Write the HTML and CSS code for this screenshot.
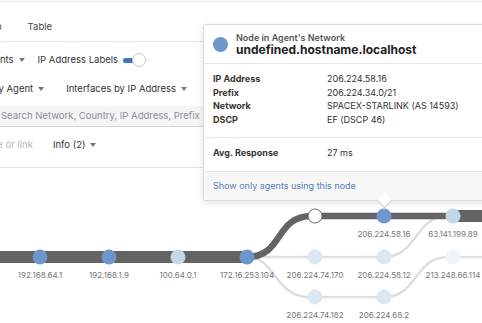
FILE: index.html
```html
<!DOCTYPE html>
<html>
<head>
    <meta charset="utf-8">
    <title>Path Visualization</title>
    <link rel="stylesheet" href="styles.css">
</head>
<body>
<div class="page">
    <nav class="tabs">
        <span class="tab tab-cut">Topo</span>
        <span class="tab">Table</span>
    </nav>

    <div class="toolbar">
        <div class="tool-row">
            <span class="tool cut-agents">Agents <i class="caret"></i></span>
            <span class="tool ip-labels">IP Address Labels
                <span class="toggle"><span class="track"></span><span class="knob"></span></span>
            </span>
        </div>
        <div class="tool-row">
            <span class="tool cut-color">Color by Agent <i class="caret"></i></span>
            <span class="tool interfaces">Interfaces by IP Address <i class="caret"></i></span>
        </div>
    </div>

    <div class="search">Search Network, Country, IP Address, Prefix</div>

    <div class="filter-row">
        <span class="filter-input">Search node or link</span>
        <span class="tool">Info (2) <i class="caret"></i></span>
    </div>

    <!-- path graph, drawn in page coordinates -->
    <svg class="graph" width="482" height="154" viewBox="0 169 482 154">
        <path class="hop-thin" d="M247 258 H384 C418 258 414 217 448 217"/>
        <path class="hop-thin" d="M247 258 C276 258 274 298 310 298 H384 C418 298 414 258 448 258 H490"/>
        <path class="hop-main" d="M-10 258 H247"/>
        <path class="hop-mid" d="M247 258 C284 258 274 217 312 217 H453"/>
        <path class="hop-main" d="M453 217 H490"/>

        <circle class="node n-blue" cx="40" cy="258" r="7.5"/>
        <circle class="node n-blue" cx="109" cy="258" r="7.5"/>
        <circle class="node n-light" cx="178" cy="258" r="7.5"/>
        <circle class="node n-blue" cx="247" cy="258" r="7.5"/>
        <circle class="node n-empty" cx="315" cy="217" r="7"/>
        <circle class="node n-blue" cx="384" cy="217" r="7.5"/>
        <circle class="node n-light" cx="453" cy="217" r="7.5"/>
        <circle class="node n-pale" cx="315" cy="258" r="7.5"/>
        <circle class="node n-pale" cx="384" cy="258" r="7.5"/>
        <circle class="node n-faint" cx="453" cy="258" r="7.5"/>
        <circle class="node n-pale" cx="315" cy="298" r="7.5"/>
        <circle class="node n-pale" cx="384" cy="298" r="7.5"/>

        <text class="ip" x="40" y="279">192.168.64.1</text>
        <text class="ip" x="109" y="279">192.168.1.9</text>
        <text class="ip" x="178" y="279">100.64.0.1</text>
        <text class="ip" x="247" y="279">172.16.253.104</text>
        <text class="ip" x="384" y="238">206.224.58.16</text>
        <text class="ip" x="453" y="238">63.141.199.89</text>
        <text class="ip" x="315" y="279">206.224.74.170</text>
        <text class="ip" x="384" y="279">206.224.58.12</text>
        <text class="ip" x="453" y="279">213.248.66.114</text>
        <text class="ip" x="315" y="319">206.224.74.182</text>
        <text class="ip" x="384" y="319">206.224.68.2</text>
    </svg>

    <div class="popover">
        <div class="pop-head">
            <span class="pop-dot"></span>
            <div>
                <div class="pop-kind">Node in Agent's Network</div>
                <div class="pop-host">undefined.hostname.localhost</div>
            </div>
        </div>
        <dl class="pop-body">
            <dt>IP Address</dt><dd>206.224.58.16</dd>
            <dt>Prefix</dt><dd>206.224.34.0/21</dd>
            <dt>Network</dt><dd>SPACEX-STARLINK (AS 14593)</dd>
            <dt>DSCP</dt><dd>EF (DSCP 46)</dd>
        </dl>
        <dl class="pop-body pop-avg">
            <dt>Avg. Response</dt><dd>27 ms</dd>
        </dl>
        <div class="pop-foot"><a href="#">Show only agents using this node</a></div>
        <span class="pop-arrow"></span>
    </div>
</div>
</body>
</html>
```

FILE: styles.css
```css
body {
    margin: 0;
    font-family: Inter, "Noto Sans", sans-serif;
    color: #333;
    background-color: #fff;
    overflow: hidden;
}

.page {
    position: relative;
    height: 322px;
    margin-top: 1px;
    border-top: 1px solid #ececec;
    overflow: hidden;
}

/* tabs */
.tabs {
    display: flex;
    gap: 26px;
    padding: 18px 0 7px;
    border-bottom: 1px solid #e4e4e4;
    font-size: 9.5px;
    line-height: 14px;
    color: #444;
}

.tab-cut {
    margin-left: -21px;
}

/* toolbar */
.toolbar {
    padding-top: 11px;
    font-size: 9.5px;
    line-height: 14px;
}

.tool-row {
    display: flex;
    align-items: center;
}

.tool-row + .tool-row {
    margin-top: 15px;
}

.tool {
    display: inline-flex;
    align-items: center;
    white-space: nowrap;
    color: #333;
}

.caret {
    display: inline-block;
    width: 0;
    height: 0;
    margin-left: 5px;
    border-left: 3px solid transparent;
    border-right: 3px solid transparent;
    border-top: 4px solid #777;
}

.cut-agents {
    margin-left: -18px;
    margin-right: 13px;
}

.cut-color {
    margin-left: -34px;
    margin-right: 22px;
}

.toggle {
    display: inline-flex;
    align-items: center;
    margin-left: 5px;
}

.toggle .track {
    width: 13px;
    height: 5px;
    border-radius: 3px;
    background-color: #3b74c4;
}

.toggle .knob {
    width: 12px;
    height: 12px;
    margin-left: -4px;
    border-radius: 50%;
    background-color: #fff;
    border: 1px solid #c8c8c8;
}

/* search */
.search {
    margin-top: 10px;
    height: 20px;
    line-height: 20px;
    padding-left: 1px;
    background-color: #f5f5f6;
    border-bottom: 1px solid #d6d6d6;
    font-size: 9.5px;
    color: #8b8d9c;
    white-space: nowrap;
}

.filter-row {
    display: flex;
    align-items: center;
    padding: 11px 0 15px;
    border-bottom: 1px solid #e4e4e4;
    font-size: 9.5px;
    line-height: 14px;
}

.filter-input {
    margin-left: -54px;
    margin-right: 20px;
    color: #b5b7c0;
    white-space: nowrap;
}

/* graph */
.graph {
    display: block;
}

.hop-main {
    fill: none;
    stroke: #646464;
    stroke-width: 12;
}

.hop-mid {
    fill: none;
    stroke: #646464;
    stroke-width: 6.5;
}

.hop-thin {
    fill: none;
    stroke: #dedede;
    stroke-width: 2.5;
}

.n-blue { fill: #6c96cc; }
.n-light { fill: #c2d7ea; }
.n-pale { fill: #dce7f4; }
.n-faint { fill: #eef4fa; }
.n-empty {
    fill: #fff;
    stroke: #666;
    stroke-width: 1;
}

.ip {
    font-family: Inter, "Noto Sans", sans-serif;
    font-size: 8px;
    fill: #777;
    text-anchor: middle;
}

/* node popover */
.popover {
    position: absolute;
    left: 203px;
    top: 22px;
    width: 300px;
    background-color: #fff;
    border: 1px solid #dcdcdc;
    border-radius: 3px;
    box-shadow: 0 2px 6px rgba(0, 0, 0, 0.12);
    font-size: 9px;
}

.pop-head {
    display: flex;
    align-items: center;
    gap: 8px;
    height: 38px;
    padding: 0 9px;
    border-bottom: 1px solid #e6e6e6;
}

.pop-dot {
    width: 15px;
    height: 15px;
    border-radius: 50%;
    background-color: #6c96cc;
}

.pop-kind {
    font-weight: 600;
    color: #555;
    line-height: 11px;
}

.pop-host {
    font-size: 12px;
    font-weight: 700;
    color: #222;
    line-height: 14px;
}

.pop-body {
    display: grid;
    grid-template-columns: 114px 1fr;
    margin: 0;
    padding: 8px 9px 11px;
    line-height: 13.5px;
    border-bottom: 1px solid #e6e6e6;
}

.pop-body dt {
    font-weight: 700;
    color: #333;
}

.pop-body dd {
    margin: 0;
    color: #333;
}

.pop-foot {
    height: 28px;
    line-height: 28px;
    padding: 0 9px;
    background-color: #f7f7f7;
}

.pop-foot a {
    color: #5780b8;
    text-decoration: none;
}

.pop-arrow {
    position: absolute;
    left: 175px;
    bottom: -6px;
    width: 10px;
    height: 10px;
    background-color: #fff;
    border-right: 1px solid #d0d0d0;
    border-bottom: 1px solid #d0d0d0;
    transform: rotate(45deg);
}
```
